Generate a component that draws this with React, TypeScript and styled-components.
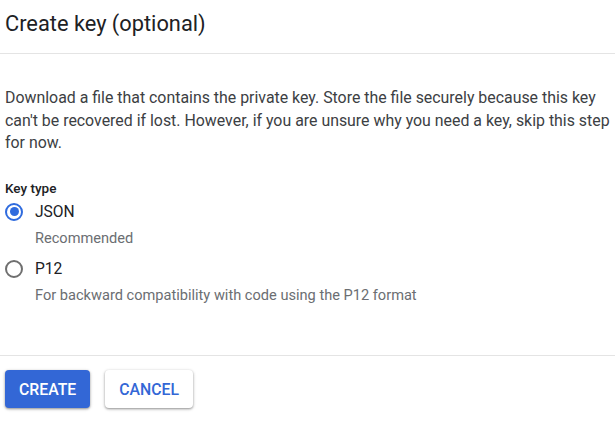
import React, { useState } from "react";
import styled, { createGlobalStyle } from "styled-components";

const GlobalStyle = createGlobalStyle`
  html, body {
    margin: 0;
    padding: 0;
    background: #ffffff;
    font-family: Roboto, "Liberation Sans", Arial, sans-serif;
    color: #202124;
  }
`;

const Dialog = styled.div`
  width: 615px;
  height: 426px;
  display: flex;
  flex-direction: column;
  box-sizing: border-box;
`;

const Header = styled.div`
  padding: 10px 5px 0 5px;
  height: 54px;
  box-sizing: border-box;
  border-bottom: 1px solid #e4e4e4;
`;

const Title = styled.h2`
  margin: 0;
  font-size: 21.8px;
  font-weight: 400;
  line-height: 28px;
  color: #202124;
`;

const Body = styled.div`
  padding: 33px 5px 0 5px;
  height: 302px;
  box-sizing: border-box;
  border-bottom: 1px solid #e4e4e4;
`;

const Description = styled.p`
  margin: 0 0 24px 0;
  font-size: 15.9px;
  line-height: 22.5px;
  color: #3c4043;
`;

const FieldLabel = styled.div`
  font-size: 13.5px;
  font-weight: 500;
  line-height: 18px;
  color: #202124;
`;

const Options = styled.div`
  display: flex;
  flex-direction: column;
  margin-top: 3px;
`;

const Option = styled.label`
  display: grid;
  grid-template-columns: 18px 1fr;
  column-gap: 12px;
  align-items: center;
  cursor: pointer;
`;

const RadioCircle = styled.span<{ $checked: boolean }>`
  width: 18px;
  height: 18px;
  box-sizing: border-box;
  border-radius: 50%;
  border: 2.2px solid ${(p) => (p.$checked ? "#2f6bde" : "#6f6f6f")};
  display: flex;
  align-items: center;
  justify-content: center;
  &::after {
    content: "";
    width: 9px;
    height: 9px;
    border-radius: 50%;
    background: #2f6bde;
    display: ${(p) => (p.$checked ? "block" : "none")};
  }
`;

const OptionName = styled.span`
  font-size: 15.6px;
  line-height: 24px;
  color: #202124;
`;

const OptionHint = styled.span`
  grid-column: 2;
  font-size: 14.6px;
  line-height: 20px;
  color: #6b6e72;
  margin-top: 4px;
  margin-bottom: 9px;
`;

const Footer = styled.div`
  display: flex;
  gap: 15px;
  padding: 14px 5px 0 5px;
`;

const Button = styled.button<{ $primary?: boolean }>`
  height: 38px;
  padding: 0 14px;
  border: none;
  border-radius: 4px;
  font-family: Roboto, "Liberation Sans", Arial, sans-serif;
  font-size: 15.8px;
  font-weight: 500;
  text-transform: uppercase;
  cursor: pointer;
  background: ${(p) => (p.$primary ? "#3367d6" : "#ffffff")};
  color: ${(p) => (p.$primary ? "#ffffff" : "#3367d6")};
  box-shadow: 0 1px 2px rgba(0, 0, 0, 0.3), 0 1px 3px 1px rgba(0, 0, 0, 0.12);
`;

const keyTypes = [
  { id: "json", name: "JSON", hint: "Recommended" },
  { id: "p12", name: "P12", hint: "For backward compatibility with code using the P12 format" },
];

export default function App() {
  const [keyType, setKeyType] = useState("json");

  return (
    <>
      <GlobalStyle />
      <Dialog>
        <Header>
          <Title>Create key (optional)</Title>
        </Header>
        <Body>
          <Description>
            Download a file that contains the private key. Store the file securely because this key
            can't be recovered if lost. However, if you are unsure why you need a key, skip this step
            for now.
          </Description>
          <FieldLabel>Key type</FieldLabel>
          <Options>
            {keyTypes.map((t) => (
              <Option key={t.id} onClick={() => setKeyType(t.id)}>
                <RadioCircle $checked={keyType === t.id} />
                <OptionName>{t.name}</OptionName>
                <OptionHint>{t.hint}</OptionHint>
              </Option>
            ))}
          </Options>
        </Body>
        <Footer>
          <Button $primary>Create</Button>
          <Button>Cancel</Button>
        </Footer>
      </Dialog>
    </>
  );
}
